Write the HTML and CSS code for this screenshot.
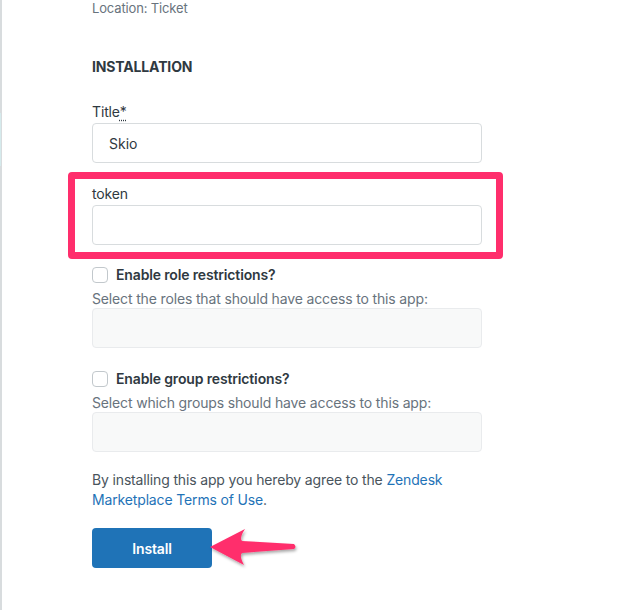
FILE: index.html
```html
<!DOCTYPE html>
<html lang="en">

<head>
  <meta charset="UTF-8" />
  <meta name="viewport" content="width=device-width, initial-scale=1.0" />
  <title>Install app</title>
  <link rel="stylesheet" href="styles.css">
</head>

<body>
  <div class="page">
    <div class="content">
      <p class="location">Location: Ticket</p>

      <h2 class="section-title">INSTALLATION</h2>

      <div class="field">
        <label class="field-label" for="title">Title<abbr title="required">*</abbr></label>
        <input class="text-input" id="title" type="text" value="Skio">
      </div>

      <div class="field field-token">
        <label class="field-label" for="token">token</label>
        <input class="text-input" id="token" type="text">
        <div class="highlight"></div>
      </div>

      <div class="restriction">
        <label class="check-row">
          <span class="checkbox"></span>
          <span class="check-label">Enable role restrictions?</span>
        </label>
        <p class="hint">Select the roles that should have access to this app:</p>
        <div class="select-input"></div>
      </div>

      <div class="restriction">
        <label class="check-row">
          <span class="checkbox"></span>
          <span class="check-label">Enable group restrictions?</span>
        </label>
        <p class="hint">Select which groups should have access to this app:</p>
        <div class="select-input"></div>
      </div>

      <p class="terms">
        <span>By installing this app you hereby agree to the <a href="#">Zendesk</a></span>
        <span><a href="#">Marketplace Terms of Use</a>.</span>
      </p>

      <div class="actions">
        <button class="install-btn">Install</button>
        <svg class="arrow" width="100" height="50" viewBox="0 0 100 50">
          <defs>
            <filter id="shadow" x="-20%" y="-30%" width="140%" height="170%">
              <feDropShadow dx="1" dy="2" stdDeviation="1.5" flood-color="#000" flood-opacity="0.35" />
            </filter>
          </defs>
          <path filter="url(#shadow)" fill="#ff2e6c"
            d="M5,25 L40,7 Q34,16 37,19 L89,22 Q92,25 89,27 L37,31 Q34,34 39,43 Z" />
        </svg>
      </div>
    </div>
  </div>
</body>

</html>
```

FILE: styles.css
```css
* {
  margin: 0;
  padding: 0;
  box-sizing: border-box;
}

body {
  font-family: "Inter", "Liberation Sans", sans-serif;
  font-size: 14px;
  line-height: 20px;
  letter-spacing: -0.15px;
  color: #2f3941;
  background-color: #fff;
}

.page {
  min-height: 610px;
  border-left: 2px solid #d8dcde;
  position: relative;
}

.page::before {
  content: "";
  position: absolute;
  left: -2px;
  top: 113px;
  width: 1px;
  height: 53px;
  background-color: #d5eaec;
}

.content {
  width: 480px;
  padding-left: 90px;
}

.location {
  font-size: 13px;
  line-height: 16px;
  color: #68737d;
}

.section-title {
  margin-top: 41px;
  font-size: 14px;
  font-weight: 700;
  line-height: 20px;
  color: #2f3941;
}

.field {
  margin-top: 25px;
  display: flex;
  flex-direction: column;
}

.field-label {
  line-height: 20px;
  margin-bottom: 1px;
}

.field-label abbr {
  text-decoration: underline dotted;
  text-underline-offset: 3px;
}

.text-input {
  height: 40px;
  width: 390px;
  padding: 0 16px;
  border: 1px solid #d8dcde;
  border-radius: 4px;
  font-family: inherit;
  font-size: 14px;
  color: #2f3941;
  background-color: #fff;
  outline: none;
}

.field-token {
  margin-top: 21px;
  position: relative;
}

.highlight {
  position: absolute;
  top: -12px;
  left: -24px;
  width: 435px;
  height: 87px;
  border: 7px solid #ff2e6c;
  border-radius: 4px;
}

.restriction {
  margin-top: 20px;
}

.restriction + .restriction {
  margin-top: 21px;
}

.check-row {
  display: flex;
  align-items: center;
  gap: 8px;
  height: 20px;
}

.checkbox {
  width: 16px;
  height: 16px;
  border: 1px solid #c2c8cc;
  border-radius: 4px;
  background-color: #fff;
}

.check-label {
  font-weight: 600;
}

.hint {
  margin-top: 5px;
  line-height: 18px;
  color: #68737d;
}

.select-input {
  width: 390px;
  height: 40px;
  border: 1px solid #e9ebed;
  border-radius: 4px;
  background-color: #f8f9f9;
}

.terms {
  margin-top: 18px;
  width: 390px;
  display: flex;
  flex-direction: column;
  color: #49545c;
}

.terms a {
  color: #1f73b7;
  text-decoration: none;
}

.actions {
  margin-top: 18px;
  position: relative;
}

.install-btn {
  width: 120px;
  height: 40px;
  border: none;
  border-radius: 4px;
  background-color: #1f73b7;
  color: #fff;
  font-family: inherit;
  font-size: 14px;
  font-weight: 600;
  letter-spacing: -0.15px;
}

.arrow {
  position: absolute;
  left: 113px;
  top: -6px;
}
```
